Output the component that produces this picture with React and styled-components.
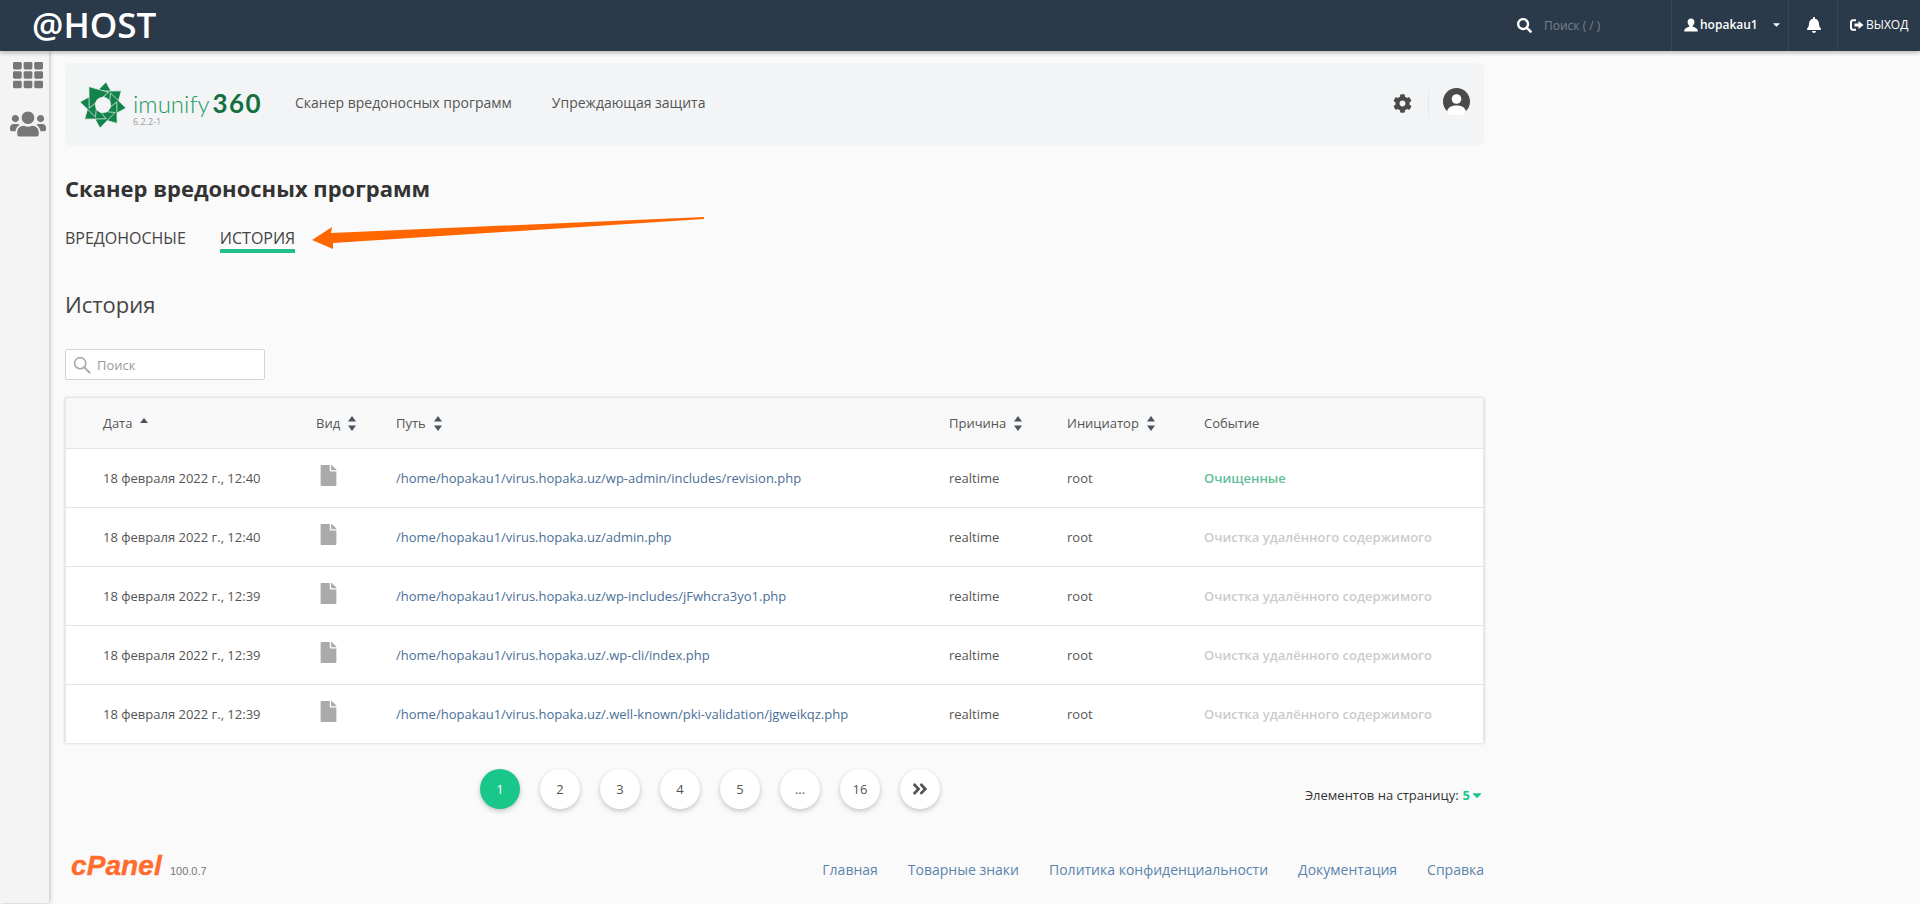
import React from "react";
import styled, { createGlobalStyle } from "styled-components";
import { FaTh, FaUsers, FaSearch, FaBell, FaCog, FaFile, FaCaretDown, FaAngleDoubleRight } from "react-icons/fa";

const Global = createGlobalStyle`
  html, body { margin: 0; padding: 0; height: 904px; overflow: hidden; background: #fafafa; }
  * { box-sizing: border-box; }
  body { font-family: "Open Sans", "Liberation Sans", sans-serif; color: #444; }
`;

const Page = styled.div`
  position: relative;
  width: 1920px;
  height: 904px;
  display: flex;
  flex-direction: column;
  overflow: hidden;
`;
const TopBar = styled.header`
  height: 51px;
  flex: none;
  background: #2b3a4a;
  box-shadow: 0 2px 4px rgba(0, 0, 0, .25);
  display: flex;
  align-items: stretch;
  padding-left: 32px;
  color: #fff;
  position: relative;
  z-index: 2;
`;
const Brand = styled.div`
  font-size: 35px;
  font-weight: 600;
  line-height: 49px;
  flex: 1;
`;
const TopSearch = styled.div`
  display: flex;
  align-items: center;
  width: 154px;
  gap: 12px;
  font-size: 12px;
  color: #77818c;
  svg { color: #fff; font-size: 15px; }
`;
const TopItem = styled.div`
  display: flex;
  align-items: center;
  width: ${p => p.$w}px;
  padding: 0 0 2px ${p => p.$pad}px;
  border-left: 1px solid #36465a;
  font-size: 12px;
  font-weight: ${p => p.$weight || 400};
  color: #fff;
`;
const Body = styled.div`
  flex: 1;
  display: flex;
  min-height: 0;
`;
const Sidebar = styled.aside`
  width: 49px;
  flex: none;
  margin-bottom: 1px;
  background: #f4f4f4;
  box-shadow: 1px 0 4px rgba(0, 0, 0, .25);
  display: flex;
  flex-direction: column;
  align-items: center;
  padding: 9px 0 0 6px;
  gap: 20px;
  color: #777;
`;
const Main = styled.main`
  width: 1435px;
  padding: 12px 0 0 16px;
  display: flex;
  flex-direction: column;
`;
const Panel = styled.section`
  height: 83px;
  background: #f3f4f6;
  border-radius: 6px;
  display: flex;
  align-items: center;
  padding: 0 0 4px 15px;
  flex: none;
`;
const LogoWrap = styled.div`
  width: 180px;
  height: 46px;
  margin: 4px 35px 0 0;
  display: flex;
  gap: 7px;
`;
const LogoText = styled.div`
  display: flex;
  flex-direction: column;
  padding-top: 8px;
`;
const LogoName = styled.div`
  font-family: "Lato", sans-serif;
  font-weight: 300;
  font-size: 24px;
  line-height: 26px;
  color: #1a9a5c;
  white-space: nowrap;
  b { font-weight: 700; color: #12703f; font-size: 26px; margin-left: 3px; letter-spacing: 1.4px; }
`;
const LogoVersion = styled.div`
  font-size: 9px;
  line-height: 10px;
  color: #999;
`;
const PanelNav = styled.a`
  font-size: 14px;
  color: #555;
  margin-right: ${p => p.$gap || 0}px;
  white-space: nowrap;
`;
const PanelTools = styled.div`
  margin-left: auto;
  display: flex;
  align-items: center;
  padding-right: 14px;
  color: #4a4a4a;
`;
const GearBtn = styled.div`
  display: flex;
  font-size: 19px;
  padding-right: 16px;
  height: 28px;
  align-items: center;
  border-right: 1px solid #e6e7e9;
  margin-right: 14px;
  margin-top: 2px;
`;
const Title = styled.h1`
  margin: 28px 0 0;
  font-size: 22px;
  line-height: 28px;
  font-weight: 700;
  color: #333;
`;
const Tabs = styled.nav`
  display: flex;
  gap: 34px;
  margin-top: 26px;
`;
const Tab = styled.a`
  font-size: 16px;
  line-height: 20px;
  color: #444;
  padding-bottom: 1px;
  border-bottom: 4px solid ${p => (p.$active ? "#22bf88" : "transparent")};
`;
const Heading = styled.h2`
  margin: 36px 0 0;
  font-size: 22px;
  line-height: 30px;
  font-weight: 400;
  color: #444;
`;
const SearchBox = styled.div`
  margin-top: 30px;
  width: 200px;
  height: 31px;
  border: 1px solid #d4d4d4;
  border-radius: 2px;
  background: #fff;
  display: flex;
  align-items: center;
  gap: 6px;
  padding-left: 7px;
  font-size: 13px;
  color: #999;
`;
const Table = styled.div`
  margin-top: 17px;
  background: #fff;
  border: 1px solid #e6e6e6;
  box-shadow: 0 1px 3px rgba(0, 0, 0, .2);
  height: 345px;
  flex: none;
`;
const Row = styled.div`
  display: grid;
  grid-template-columns: 213px 80px 553px 118px 137px 1fr;
  align-items: center;
  padding-left: 37px;
  height: ${p => (p.$head ? 50 : 59)}px;
  font-size: 13px;
  color: #555;
  background: ${p => (p.$head ? "#f8f8f8" : "#fff")};
  border-top: ${p => (p.$first ? "none" : "1px solid #e4e4e4")};
`;
const HeadCell = styled.div`
  display: flex;
  align-items: center;
  gap: 8px;
  color: #555;
`;
const FileCell = styled.div`
  display: flex;
  color: #aaa;
  font-size: 21px;
  padding: 0 0 6px 2px;
`;
const PathLink = styled.a`
  color: #4a7098;
`;
const Event = styled.div`
  font-weight: 600;
  color: ${p => (p.$ok ? "#5fc09a" : "#cbcbcb")};
`;
const PagerRow = styled.div`
  display: flex;
  align-items: flex-start;
  justify-content: space-between;
  padding-left: 415px;
  margin-top: 27px;
`;
const Pager = styled.div`
  display: flex;
  gap: 20px;
`;
const PageBtn = styled.div`
  width: 40px;
  height: 40px;
  border-radius: 50%;
  display: flex;
  align-items: center;
  justify-content: center;
  font-size: 13px;
  background: ${p => (p.$active ? "#19c78a" : "#fff")};
  color: ${p => (p.$active ? "#fff" : "#555")};
  box-shadow: 0 2px 5px rgba(0, 0, 0, .22);
`;
const PerPage = styled.div`
  display: flex;
  align-items: center;
  margin-top: 17px;
  font-size: 13px;
  color: #333;
  b { color: #19c78a; margin-left: 4px; }
  svg { color: #19c78a; font-size: 14px; }
`;
const Footer = styled.footer`
  display: flex;
  align-items: center;
  margin-top: 48px;
  height: 24px;
  padding-left: 6px;
`;
const CPanelLogo = styled.div`
  font-family: "Liberation Sans", sans-serif;
  font-style: italic;
  font-weight: 700;
  font-size: 28px;
  letter-spacing: .1px;
  -webkit-text-stroke: .4px #ff6c2c;
  color: #ff6c2c;
  line-height: 24px;
  margin-top: -6px;
`;
const Version = styled.div`
  font-family: "Liberation Sans", sans-serif;
  font-size: 11px;
  color: #777;
  margin: 4px 0 0 8px;
`;
const FooterLinks = styled.div`
  margin-left: auto;
  display: flex;
  gap: 30px;
  font-size: 14px;
  a { color: #5b84ad; }
`;
const Arrow = styled.svg`
  position: absolute;
  left: 0;
  top: 0;
  pointer-events: none;
  z-index: 3;
`;

const SortIcon = () => (
  <svg width="8" height="15" viewBox="0 0 8 15">
    <path d="M4 0 8 5.5H0Z" fill="#4a5564" />
    <path d="M4 15 0 9.5H8Z" fill="#4a5564" />
  </svg>
);
const SortUp = () => (
  <svg width="8" height="6" viewBox="0 0 8 6" style={{ marginTop: -4 }}>
    <path d="M4 0 8 5H0Z" fill="#4a5564" />
  </svg>
);
const LogoutIcon = () => (
  <svg width="14" height="12" viewBox="0 0 14 12" style={{ marginRight: 2 }}>
    <path d="M6 1.2H3.4A2.4 2.4 0 0 0 1 3.6v4.8a2.4 2.4 0 0 0 2.4 2.4H6" fill="none" stroke="#fff" strokeWidth="2" />
    <path d="M4.5 4.5H8.5V2L13.5 6 8.5 10V7.5H4.5Z" fill="#fff" />
  </svg>
);
const UserIcon = () => (
  <svg width="14" height="14" viewBox="0 0 14 13" style={{ marginRight: 2 }}>
    <path d="M7 0C4.8 0 3.6 1.6 3.6 3.6c0 1.6.7 2.8 1.7 3.6v1C3 9 .5 9.6.2 12.5V13H13.8v-.5C13.5 9.6 11 9 8.7 8.2v-1c1-.8 1.7-2 1.7-3.6C10.4 1.6 9.2 0 7 0Z" fill="#fff" />
  </svg>
);
const Avatar = () => (
  <svg width="27" height="27" viewBox="0 0 27 27" style={{ marginBottom: 3 }}>
    <circle cx="13.5" cy="13.5" r="13.5" fill="#4a4a4a" />
    <circle cx="13.5" cy="11" r="4.8" fill="#fff" />
    <path d="M4 23.5C5 19 9 17.5 13.5 17.5S22 19 23 23.5L20 27H7Z" fill="#fff" />
  </svg>
);
const LensIcon = () => (
  <svg width="18" height="18" viewBox="0 0 18 18">
    <circle cx="7.2" cy="7.2" r="5.6" fill="none" stroke="#aaa" strokeWidth="1.6" />
    <path d="M11.4 11.4 16.6 16.6" stroke="#aaa" strokeWidth="2" strokeLinecap="round" />
  </svg>
);
const Petal = ({ r }) => (
  <g transform={`rotate(${r} 23 23)`}>
    <path d="M26 0 36 18 11 15.5Z" fill="#12834a" stroke="#f3f4f6" strokeWidth=".7" />
  </g>
);
const ImunifyMark = () => (
  <svg width="46" height="46" viewBox="0 0 46 46" style={{ flex: "none" }}>
    {[0, 45, 90, 135, 180, 225, 270, 315].map(r => <Petal key={r} r={r} />)}
    <circle cx="23" cy="23" r="8" fill="#f3f4f6" />
  </svg>
);

const rows = [
  ["18 февраля 2022 г., 12:40", "/home/hopakau1/virus.hopaka.uz/wp-admin/includes/revision.php", "Очищенные", true],
  ["18 февраля 2022 г., 12:40", "/home/hopakau1/virus.hopaka.uz/admin.php", "Очистка удалённого содержимого"],
  ["18 февраля 2022 г., 12:39", "/home/hopakau1/virus.hopaka.uz/wp-includes/jFwhcra3yo1.php", "Очистка удалённого содержимого"],
  ["18 февраля 2022 г., 12:39", "/home/hopakau1/virus.hopaka.uz/.wp-cli/index.php", "Очистка удалённого содержимого"],
  ["18 февраля 2022 г., 12:39", "/home/hopakau1/virus.hopaka.uz/.well-known/pki-validation/jgweikqz.php", "Очистка удалённого содержимого"],
];

export default function App() {
  return (
    <Page>
      <Global />
      <TopBar>
        <Brand>@HOST</Brand>
        <TopSearch><FaSearch />Поиск ( / )</TopSearch>
        <TopItem $w={117} $pad={12} $weight={600}>
          <UserIcon />hopakau1
          <FaCaretDown size={11} style={{ marginLeft: 13 }} />
        </TopItem>
        <TopItem $w={49} $pad={17}><FaBell size={16} /></TopItem>
        <TopItem $w={83} $pad={12}><LogoutIcon />ВЫХОД</TopItem>
      </TopBar>
      <Body>
        <Sidebar>
          <FaTh size={30} />
          <FaUsers size={36} style={{ margin: "-4px 0" }} />
        </Sidebar>
        <Main>
          <Panel>
            <LogoWrap>
              <ImunifyMark />
              <LogoText>
                <LogoName>imunify<b>360</b></LogoName>
                <LogoVersion>6.2.2-1</LogoVersion>
              </LogoText>
            </LogoWrap>
            <PanelNav $gap={40}>Сканер вредоносных программ</PanelNav>
            <PanelNav>Упреждающая защита</PanelNav>
            <PanelTools>
              <GearBtn><FaCog /></GearBtn>
              <Avatar />
            </PanelTools>
          </Panel>
          <Title>Сканер вредоносных программ</Title>
          <Tabs>
            <Tab>ВРЕДОНОСНЫЕ</Tab>
            <Tab $active>ИСТОРИЯ</Tab>
          </Tabs>
          <Heading>История</Heading>
          <SearchBox><LensIcon />Поиск</SearchBox>
          <Table>
            <Row $head $first>
              <HeadCell>Дата <SortUp /></HeadCell>
              <HeadCell>Вид <SortIcon /></HeadCell>
              <HeadCell>Путь <SortIcon /></HeadCell>
              <HeadCell>Причина <SortIcon /></HeadCell>
              <HeadCell>Инициатор <SortIcon /></HeadCell>
              <HeadCell>Событие</HeadCell>
            </Row>
            {rows.map(([date, path, ev, ok]) => (
              <Row key={path}>
                <div>{date}</div>
                <FileCell><FaFile /></FileCell>
                <PathLink>{path}</PathLink>
                <div>realtime</div>
                <div>root</div>
                <Event $ok={ok}>{ev}</Event>
              </Row>
            ))}
          </Table>
          <PagerRow>
            <Pager>
              <PageBtn $active>1</PageBtn>
              <PageBtn>2</PageBtn>
              <PageBtn>3</PageBtn>
              <PageBtn>4</PageBtn>
              <PageBtn>5</PageBtn>
              <PageBtn>...</PageBtn>
              <PageBtn>16</PageBtn>
              <PageBtn><FaAngleDoubleRight size={18} /></PageBtn>
            </Pager>
            <PerPage>Элементов на страницу:<b>5</b><FaCaretDown /></PerPage>
          </PagerRow>
          <Footer>
            <CPanelLogo>cPanel</CPanelLogo>
            <Version>100.0.7</Version>
            <FooterLinks>
              <a>Главная</a>
              <a>Товарные знаки</a>
              <a>Политика конфиденциальности</a>
              <a>Документация</a>
              <a>Справка</a>
            </FooterLinks>
          </Footer>
        </Main>
      </Body>
      <Arrow width="1920" height="904" viewBox="0 0 1920 904">
        <path d="M312 240 332 227 331 233 704 217 704 219 333 243 333 249Z" fill="#ff6600" />
      </Arrow>
    </Page>
  );
}
